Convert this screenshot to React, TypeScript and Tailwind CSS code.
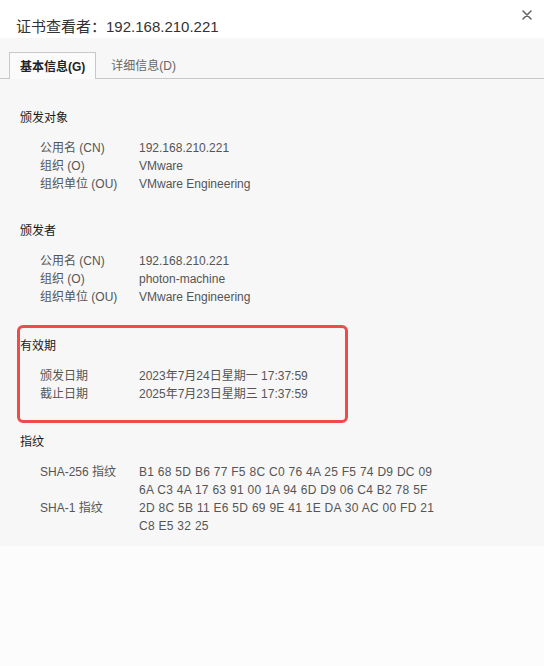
const SECTIONS = [
  {
    title: '颁发对象',
    rows: [
      ['公用名 (CN)', ['192.168.210.221']],
      ['组织 (O)', ['VMware']],
      ['组织单位 (OU)', ['VMware Engineering']],
    ],
  },
  {
    title: '颁发者',
    rows: [
      ['公用名 (CN)', ['192.168.210.221']],
      ['组织 (O)', ['photon-machine']],
      ['组织单位 (OU)', ['VMware Engineering']],
    ],
  },
  {
    title: '有效期',
    highlight: true,
    rows: [
      ['颁发日期', ['2023年7月24日星期一 17:37:59']],
      ['截止日期', ['2025年7月23日星期三 17:37:59']],
    ],
  },
  {
    title: '指纹',
    hex: true,
    rows: [
      ['SHA-256 指纹', ['B1 68 5D B6 77 F5 8C C0 76 4A 25 F5 74 D9 DC 09', '6A C3 4A 17 63 91 00 1A 94 6D D9 06 C4 B2 78 5F']],
      ['SHA-1 指纹', ['2D 8C 5B 11 E6 5D 69 9E 41 1E DA 30 AC 00 FD 21', 'C8 E5 32 25']],
    ],
  },
] as { title: string; highlight?: boolean; hex?: boolean; rows: [string, string[]][] }[];

export default function App() {
  return (
    <div
      className="w-[544px] h-[666px] bg-[#fcfcfc] text-[12px]"
      style={{ fontFamily: '"Liberation Sans", "Noto Sans CJK SC", sans-serif' }}
    >
      {/* Header */}
      <div className="relative h-[38px] bg-white">
        <h1 className="pl-[16px] pt-[17px] text-[15px] leading-[20px] text-[#333]">证书查看者：192.168.210.221</h1>
        <button className="absolute top-[10px] right-[12px] w-[10px] h-[10px]">
          <svg viewBox="0 0 10 10" className="w-[10px] h-[10px]">
            <path d="M1 1L9 9M9 1L1 9" stroke="#666" strokeWidth="1.6" strokeLinecap="round" />
          </svg>
        </button>
      </div>

      {/* Body */}
      <div className="bg-[#f7f7f7] pb-[11px]">
        {/* Tabs */}
        <div className="flex pt-[14px] pl-[9px] border-b border-[#c8c8c8]">
          <div className="h-[27px] -mb-px px-[10px] pt-px flex items-center bg-[#fbfbfb] border border-b-0 border-[#c8c8c8] font-bold text-[#222]">
            基本信息(G)
          </div>
          <div className="h-[26px] px-[15px] pt-px flex items-center text-[#666]">详细信息(D)</div>
        </div>

        <div className="px-[20px] pt-px">
          {SECTIONS.map((s, i) => (
            <div key={s.title} className={`relative ${i === 2 ? 'mt-[31px]' : i === 3 ? 'mt-[30px]' : 'mt-[29px]'}`}>
              {s.highlight && (
                <div className="absolute top-[-12px] left-[-3px] w-[331px] h-[98px] border-[3px] border-[#f04a4a] rounded-[6px] pointer-events-none" />
              )}
              <div className="leading-[18px] text-[#1a1a1a]">{s.title}</div>
              <div className="mt-[12px] pl-[20px]">
                {s.rows.map(([label, lines]) => (
                  <div key={label} className="flex leading-[18px] text-[#555]">
                    <div className="w-[99px] shrink-0">{label}</div>
                    <div className={s.hex ? 'tracking-[0.28px]' : ''}>
                      {lines.map((l) => (
                        <div key={l}>{l}</div>
                      ))}
                    </div>
                  </div>
                ))}
              </div>
            </div>
          ))}
        </div>
      </div>
    </div>
  );
}
